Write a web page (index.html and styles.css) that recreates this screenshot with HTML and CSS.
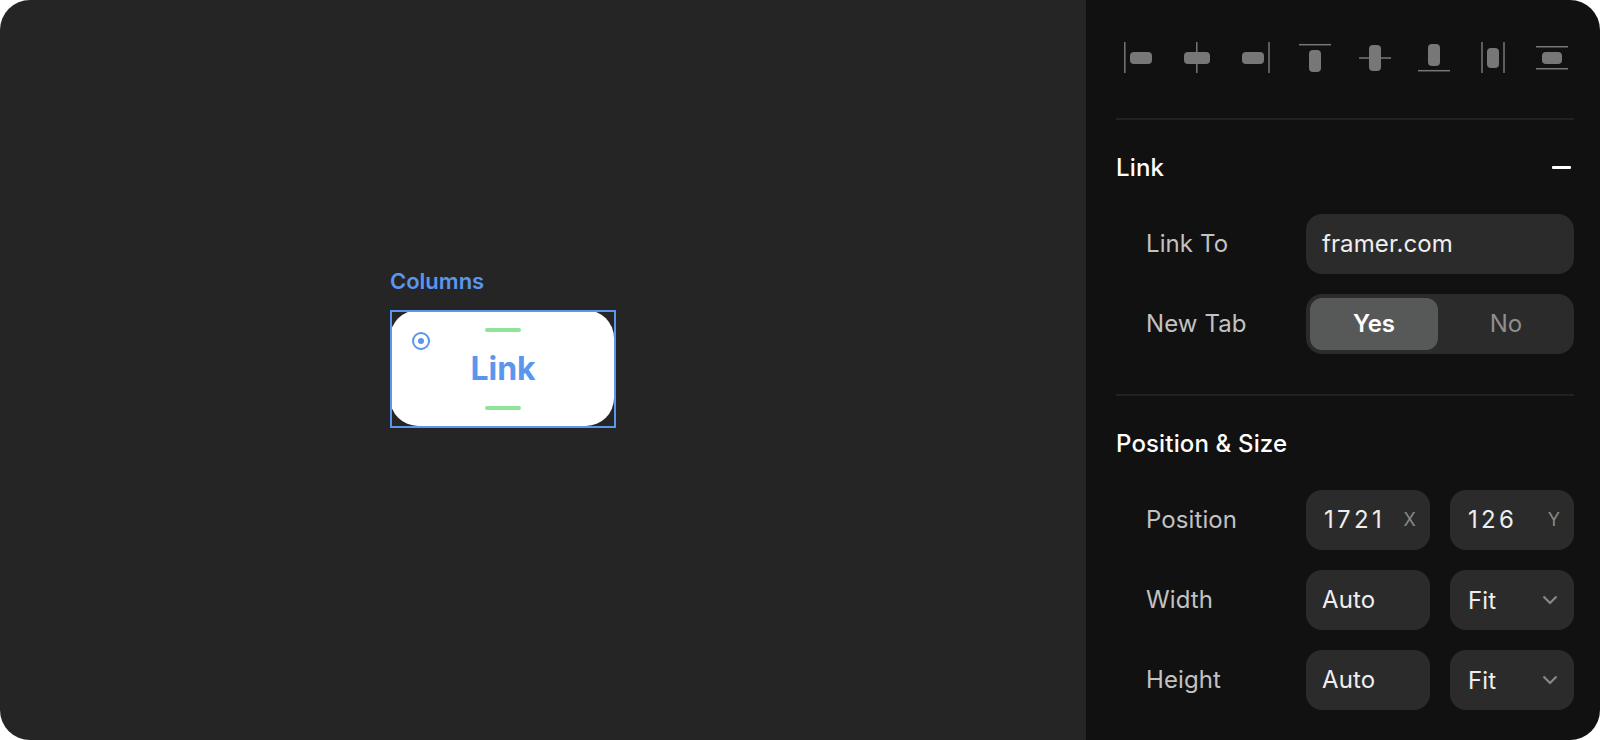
FILE: index.html
```html
<!DOCTYPE html>
<html lang="en">
<head>
  <meta charset="UTF-8">
  <title>Link properties</title>
  <link rel="stylesheet" href="styles.css">
</head>

<body>
  <div class="app">
    <main class="canvas">
      <div class="frame">
        <div class="frame-label">Columns</div>
        <div class="frame-box">
          <div class="link-card">
            <svg class="target" width="20" height="20" viewBox="0 0 20 20">
              <circle cx="10" cy="10" r="8" fill="none" stroke="#5b96ee" stroke-width="2"/>
              <circle cx="10" cy="10" r="3" fill="#5b96ee"/>
            </svg>
            <span class="handle"></span>
            <span class="link-text">Link</span>
            <span class="handle"></span>
          </div>
        </div>
      </div>
    </main>

    <aside class="panel">
      <div class="align-row">
        <svg width="32" height="32" viewBox="0 0 32 32"><path class="line" d="M1.8 0V31"/><rect x="7" y="10" width="22" height="12" rx="4"/></svg>
        <svg width="32" height="32" viewBox="1 0 32 32"><rect x="3" y="10" width="26" height="12" rx="4"/><path class="line" d="M15.8 0V31"/></svg>
        <svg width="32" height="32" viewBox="2 0 32 32"><path class="line" d="M30 0V31"/><rect x="3" y="10" width="22" height="12" rx="4"/></svg>
        <svg width="32" height="32" viewBox="1 0 32 32"><path class="line" d="M0 2.7H32"/><rect x="10" y="8" width="12" height="22" rx="4"/></svg>
        <svg width="32" height="32" viewBox="0 0 32 32"><rect x="10" y="3" width="12" height="26" rx="4"/><path class="line" d="M0 16H32"/></svg>
        <svg width="32" height="32" viewBox="0 0 32 32"><path class="line" d="M0 28.7H32"/><rect x="10" y="2" width="12" height="22" rx="4"/></svg>
        <svg width="32" height="32" viewBox="0 0 32 32"><path class="line" d="M5 0V31M27 0V31"/><rect x="10" y="6" width="12" height="20" rx="4"/></svg>
        <svg width="32" height="32" viewBox="0 0 32 32"><path class="line" d="M0 4.7H32M0 26.7H32"/><rect x="6" y="10" width="20" height="12" rx="4"/></svg>
      </div>

      <section class="section section-link">
        <div class="section-head">
          <h2>Link</h2>
          <span class="minus"></span>
        </div>
        <div class="row">
          <label>Link To</label>
          <div class="field wide">framer.com</div>
        </div>
        <div class="row">
          <label>New Tab</label>
          <div class="segmented">
            <div class="seg active">Yes</div>
            <div class="seg">No</div>
          </div>
        </div>
      </section>

      <section class="section">
        <div class="section-head">
          <h2>Position &amp; Size</h2>
        </div>
        <div class="row">
          <label>Position</label>
          <div class="field num"><span class="value">1721</span><span class="axis">X</span></div>
          <div class="field num"><span class="value">126</span><span class="axis">Y</span></div>
        </div>
        <div class="row">
          <label>Width</label>
          <div class="field">Auto</div>
          <div class="field select">Fit
            <svg width="16" height="10" viewBox="0 0 16 10"><path d="M1.5 1.5L8 8L14.5 1.5"/></svg>
          </div>
        </div>
        <div class="row">
          <label>Height</label>
          <div class="field">Auto</div>
          <div class="field select">Fit
            <svg width="16" height="10" viewBox="0 0 16 10"><path d="M1.5 1.5L8 8L14.5 1.5"/></svg>
          </div>
        </div>
      </section>
    </aside>
  </div>
</body>
</html>
```

FILE: styles.css
```css
html, body {
  margin: 0;
  height: 100%;
  background-color: #fff;
  overflow: hidden;
}

body {
  font-family: Inter, "Liberation Sans", sans-serif;
  color: #fff;
}

.app {
  display: flex;
  width: 1600px;
  height: 740px;
  border-radius: 30px;
  overflow: hidden;
}

.canvas {
  flex: 1;
  background-color: #252525;
  padding: 268px 0 0 390px;
  box-sizing: border-box;
}

.frame {
  width: 226px;
}

.frame-label {
  font-size: 22px;
  font-weight: 600;
  line-height: 26px;
  color: #5b96ee;
  margin-bottom: 16px;
}

.frame-box {
  position: relative;
  height: 118px;
}

/* selection outline sits on top of the card */
.frame-box::after {
  content: "";
  position: absolute;
  inset: 0;
  border: 2px solid #5b96ee;
}

.link-card {
  position: relative;
  width: 224px;
  height: 116px;
  background-color: #fff;
  border-radius: 28px;
  display: flex;
  flex-direction: column;
  align-items: center;
  justify-content: space-between;
  padding: 18px 0 16px 2px;
  box-sizing: border-box;
}

.target {
  position: absolute;
  left: 21px;
  top: 21px;
}

.handle {
  width: 36px;
  height: 4px;
  border-radius: 2px;
  background-color: #90e39a;
}

.link-text {
  font-size: 32px;
  font-weight: 700;
  line-height: 40px;
  color: #5b96ee;
}

.panel {
  width: 514px;
  background-color: #111;
  padding: 0 26px 0 30px;
  box-sizing: border-box;
}

.align-row {
  display: flex;
  justify-content: space-between;
  padding: 42px 6px 0 7px;
  height: 76px;
  border-bottom: 2px solid #222;
}

.align-row svg {
  display: block;
  overflow: visible;
  fill: #777;
}

.align-row .line {
  fill: none;
  stroke: #777;
  stroke-width: 1.5;
}

.section {
  padding-bottom: 40px;
}

.section-link {
  border-bottom: 2px solid #222;
}

.section-head {
  display: flex;
  justify-content: space-between;
  align-items: center;
  height: 94px;
}

.section-head h2 {
  margin: 0;
  font-size: 24px;
  font-weight: 500;
  letter-spacing: 0.15px;
}

.minus {
  width: 19px;
  height: 3px;
  margin-right: 3px;
  background-color: #fff;
  border-radius: 1px;
}

.row {
  display: flex;
  align-items: center;
  gap: 20px;
  margin-bottom: 20px;
  padding-left: 30px;
}

.row:last-child {
  margin-bottom: 0;
}

.row label {
  width: 140px;
  padding-bottom: 2px;
  font-size: 24px;
  letter-spacing: 0.1px;
  color: #c2c2c2;
}

.field {
  flex: 0 0 124px;
  height: 60px;
  display: flex;
  align-items: center;
  justify-content: space-between;
  padding: 0 16px 2px;
  box-sizing: border-box;
  background-color: #2b2b2b;
  border-radius: 16px;
  font-size: 24px;
  letter-spacing: 0.1px;
  color: #eee;
}

.field.wide {
  flex: 1;
}

.field.num {
  padding: 0 14px 2px 18px;
}

.field.num .value {
  letter-spacing: 3.3px;
}

.field.num .axis {
  font-size: 18px;
  color: #888;
}

.field.select {
  padding: 0 16px 0 18px;
}

.field.select svg {
  fill: none;
  stroke: #888;
  stroke-width: 2.2;
}

.segmented {
  flex: 1;
  height: 60px;
  display: flex;
  padding: 4px;
  box-sizing: border-box;
  background-color: #2b2b2b;
  border-radius: 16px;
}

.seg {
  flex: 1;
  display: flex;
  align-items: center;
  justify-content: center;
  padding: 0 0 2px 4px;
  font-size: 24px;
  color: #8e8e8e;
}

.seg.active {
  flex: 0 0 128px;
  padding-left: 0;
  box-sizing: border-box;
  background-color: #575958;
  border-radius: 12px;
  color: #fff;
  font-weight: 600;
}
```
